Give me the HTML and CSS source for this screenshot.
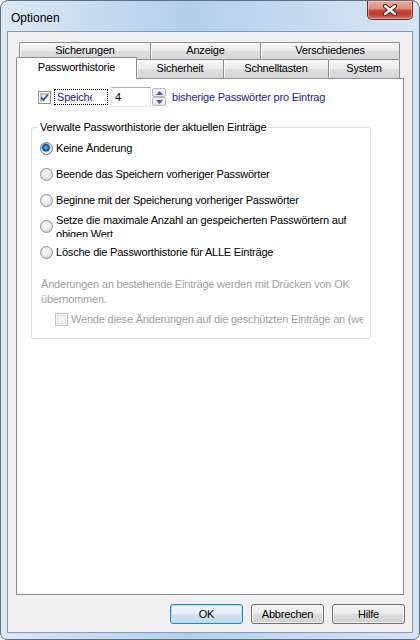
FILE: index.html
```html
<!DOCTYPE html>
<html lang="de">
<head>
<meta charset="utf-8">
<title>Optionen</title>
<link rel="stylesheet" href="styles.css">
</head>
<body>
<div class="window">
  <div class="titlebar">
    <span class="title">Optionen</span>
    <div class="close">
      <svg width="18" height="12" viewBox="0 0 18 12">
        <path d="M4 2 L14 10 M14 2 L4 10" stroke="#4a1712" stroke-width="4.2" stroke-linecap="round" fill="none"/>
        <path d="M4 2 L14 10 M14 2 L4 10" stroke="#ffffff" stroke-width="2.4" stroke-linecap="round" fill="none"/>
      </svg>
    </div>
  </div>
  <div class="client">
    <div class="tabctl">
      <div class="tabrow back">
        <div class="tab t-sicherungen">Sicherungen</div>
        <div class="tab t-anzeige">Anzeige</div>
        <div class="tab t-versch">Verschiedenes</div>
      </div>
      <div class="tabrow front">
        <div class="tab sel t-pw">Passworthistorie</div>
        <div class="tab t-sicherheit">Sicherheit</div>
        <div class="tab t-schnell">Schnelltasten</div>
        <div class="tab t-system">System</div>
      </div>
      <div class="panel">
        <div class="row1">
          <span class="cb checked">
            <svg width="11" height="11" viewBox="0 0 11 11"><path d="M2 5.5 L4.5 8 L9 2.5" stroke="#4a5c8f" stroke-width="1.9" fill="none"/></svg>
          </span>
          <span class="focus"><span class="cliptext">Speichern</span></span>
          <span class="num">4</span>
          <span class="spin">
            <span class="spinbtn"><svg width="7" height="4" viewBox="0 0 7 4"><path d="M0 4 L3.5 0 L7 4 Z" fill="#4d6185"/></svg></span>
            <span class="spinbtn"><svg width="7" height="4" viewBox="0 0 7 4"><path d="M0 0 L3.5 4 L7 0 Z" fill="#4d6185"/></svg></span>
          </span>
          <span class="bluetext">bisherige Passwörter pro Eintrag</span>
        </div>
        <fieldset class="group">
          <legend class="legend">Verwalte Passworthistorie der aktuellen Einträge</legend>
          <div class="opts">
            <div class="opt"><span class="radio on"></span><span class="lbl">Keine Änderung</span></div>
            <div class="opt"><span class="radio"></span><span class="lbl">Beende das Speichern vorheriger Passwörter</span></div>
            <div class="opt"><span class="radio"></span><span class="lbl">Beginne mit der Speicherung vorheriger Passwörter</span></div>
            <div class="opt"><span class="radio"></span><span class="lbl lbl2">Setze die maximale Anzahl an gespeicherten Passwörtern auf<br>obigen Wert</span></div>
            <div class="opt"><span class="radio"></span><span class="lbl">Lösche die Passworthistorie für ALLE Einträge</span></div>
          </div>
          <p class="note">Änderungen an bestehende Einträge werden mit Drücken von OK<br>übernommen.</p>
          <div class="disrow"><span class="cb disabled"></span><span class="dislbl">Wende diese Änderungen auf die geschützten Einträge an (werden nicht geändert)</span></div>
        </fieldset>
      </div>
    </div>
    <div class="buttons">
      <button class="btn def">OK</button>
      <button class="btn">Abbrechen</button>
      <button class="btn">Hilfe</button>
    </div>
  </div>
</div>
</body>
</html>
```

FILE: styles.css
```css
html, body {
  margin: 0;
  padding: 0;
  background: #ffffff;
}

body {
  font-family: "Liberation Sans", Arial, sans-serif;
  font-size: 11px;
  letter-spacing: -0.2px;
  color: #000;
}

.window {
  width: 420px;
  height: 640px;
  box-sizing: border-box;
  border: 1px solid #5f6e80;
  border-radius: 8px 8px 7px 7px;
  background:
    linear-gradient(to right, #dce9f6 0%, #c8dcf1 22%, #b3cfed 45%, #c2d8f0 65%, #d7e6f6 100%);
  display: flex;
  flex-direction: column;
  overflow: hidden;
}

.titlebar {
  height: 30px;
  flex: none;
  display: flex;
  justify-content: space-between;
  align-items: flex-start;
}

.title {
  margin: 10px 0 0 10px;
  font-size: 12px;
  letter-spacing: 0;
  line-height: 14px;
}

.close {
  width: 46px;
  height: 19px;
  margin-right: 6px;
  box-sizing: border-box;
  border: 1px solid #6d2b25;
  border-top: none;
  border-radius: 0 0 5px 5px;
  background: linear-gradient(to bottom, #e9aa9c 0%, #dd8f81 42%, #c54a3b 52%, #bf3b2c 72%, #d1705f 100%);
  box-shadow: inset 0 0 0 1px rgba(255, 220, 210, 0.45);
  display: flex;
  align-items: center;
  justify-content: center;
}

.client {
  flex: 1;
  margin: 0 6px 6px 6px;
  border: 1px solid #8799ad;
  background: #f0f0f0;
  display: flex;
  flex-direction: column;
  padding: 10px 8px 8px 8px;
  min-height: 0;
}

.tabctl {
  flex: 1;
  display: flex;
  flex-direction: column;
  min-height: 0;
}

.tabrow {
  display: flex;
  flex: none;
}

.back {
  height: 17px;
  margin-left: 3px;
}

.front {
  height: 19px;
}

.tab {
  box-sizing: border-box;
  height: 100%;
  border: 1px solid #898c95;
  border-bottom: none;
  border-radius: 2px 2px 0 0;
  background: linear-gradient(to bottom, #f6f6f6 0%, #ebebeb 50%, #dedede 51%, #d6d6d6 100%);
  box-shadow: inset 1px 1px 0 #fcfcfc;
  text-align: center;
  line-height: 15px;
  white-space: nowrap;
}

.tab + .tab {
  margin-left: -1px;
}

.front .tab {
  line-height: 17px;
}

.t-sicherungen { width: 132px; }
.t-anzeige { width: 111px; }
.t-versch { width: 140px; }

.t-pw { width: 121px; }
.t-sicherheit { width: 88px; }
.t-schnell { width: 106px; }
.t-system { width: 72px; }

.tab.sel {
  position: relative;
  z-index: 2;
  height: 22px;
  margin-top: -2px;
  background: #ffffff;
  box-shadow: none;
  line-height: 14px;
  padding-top: 2px;
}

.panel {
  flex: 1;
  border: 1px solid #898c95;
  background: #ffffff;
  padding-top: 8px;
  min-height: 0;
}

.row1 {
  display: flex;
  align-items: center;
  height: 20px;
  margin-left: 21px;
}

.cb {
  box-sizing: border-box;
  width: 13px;
  height: 13px;
  flex: none;
  border: 1px solid #8e8f8f;
  background: linear-gradient(135deg, #d9dde2 0%, #eef0f2 55%, #fbfbfb 100%);
  box-shadow: inset 0 0 0 1px #f4f4f4, inset 1px 1px 0 2px #bcc2c8;
  display: flex;
  align-items: center;
  justify-content: center;
}

.cb.checked svg {
  display: block;
}

.cb.disabled {
  border-color: #c4c4c4;
  background: #f4f4f4;
  box-shadow: inset 0 0 0 1px #fafafa, inset 0 0 0 2px #e2e2e2;
}

.focus {
  box-sizing: border-box;
  margin-left: 3px;
  width: 54px;
  height: 16px;
  border: 1px dotted #000;
  padding-left: 2px;
  line-height: 14px;
  color: #1a1aa6;
  display: flex;
}

.cliptext {
  width: 35px;
  overflow: hidden;
  white-space: nowrap;
}

.num {
  box-sizing: border-box;
  margin-left: 3px;
  width: 40px;
  height: 20px;
  border: 1px solid;
  border-color: #abadb3 #dbdfe6 #e3e9ef #e2e3ea;
  padding-left: 3px;
  line-height: 18px;
  background: #fff;
}

.spin {
  box-sizing: border-box;
  width: 14px;
  height: 20px;
  margin-left: 1px;
  display: flex;
  flex-direction: column;
  justify-content: center;
  gap: 0;
}

.spinbtn {
  box-sizing: border-box;
  height: 9px;
  border: 1px solid #b5b9c0;
  border-radius: 2px;
  background: linear-gradient(to bottom, #f8f8f8, #e4e6ea);
  display: flex;
  align-items: center;
  justify-content: center;
}

.spinbtn svg {
  display: block;
}

.bluetext {
  margin-left: 6px;
  color: #1a1aa6;
  white-space: nowrap;
}

.group {
  box-sizing: border-box;
  width: 340px;
  margin: 14px 0 0 14px;
  border: 1px solid #d5dfe5;
  border-radius: 3px;
  padding: 0 0 9px 8px;
  min-width: 0;
}

.legend {
  padding: 0 2px;
  margin-left: -2px;
  line-height: 13px;
}

.opts {
  margin-top: 1px;
}

.opt {
  display: flex;
  align-items: center;
  height: 26px;
}

.radio {
  box-sizing: border-box;
  width: 13px;
  height: 13px;
  flex: none;
  border-radius: 50%;
  border: 1px solid #8f9194;
  background: radial-gradient(circle at 45% 40%, #ffffff 0%, #f0f0f0 35%, #d4d4d4 80%, #c9c9c9 100%);
  margin-right: 3px;
}

.radio.on {
  border-color: #6c7a8c;
  background: radial-gradient(circle at 45% 42%, #7fd0fb 0px, #2a86d3 1.6px, #0d4f92 3.3px, #9ab6cf 4.2px, #eef2f6 5px, #dcdcdc 6px);
}

.lbl {
  white-space: nowrap;
  line-height: 14px;
}

.lbl2 {
  align-self: flex-start;
  height: 24px;
  overflow: hidden;
}

.note {
  margin: 12px 0 0 1px;
  line-height: 15px;
  color: #a0a0a0;
}

.disrow {
  display: flex;
  align-items: center;
  height: 20px;
  margin: 2px 0 0 15px;
}

.dislbl {
  margin-left: 3px;
  width: 292px;
  overflow: hidden;
  white-space: nowrap;
  color: #a0a0a0;
}

.buttons {
  display: flex;
  justify-content: flex-end;
  gap: 8px;
  margin-top: 9px;
  margin-right: -1px;
  flex: none;
}

.btn {
  box-sizing: border-box;
  width: 73px;
  height: 20px;
  padding: 0;
  border: 1px solid #707070;
  border-radius: 3px;
  background: linear-gradient(to bottom, #f2f2f2 0%, #ebebeb 49%, #dddddd 50%, #cfcfcf 100%);
  box-shadow: inset 0 0 0 1px rgba(255, 255, 255, 0.7);
  font-family: "Liberation Sans", Arial, sans-serif;
  font-size: 11px;
  letter-spacing: -0.2px;
  color: #000;
  line-height: 18px;
}

.btn.def {
  border-color: #3c7fb1;
  box-shadow: inset 0 0 0 1px #9fe3fb;
  background: linear-gradient(to bottom, #eef6fb 0%, #e4eef5 49%, #d3e2ed 50%, #c7d8e5 100%);
}
```
